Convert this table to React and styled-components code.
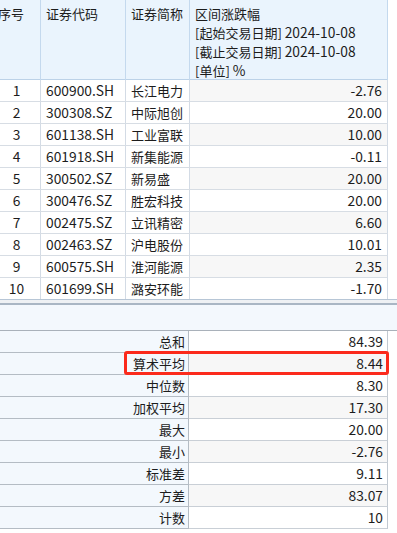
import React from "react";
import styled, { createGlobalStyle } from "styled-components";

const GlobalStyle = createGlobalStyle`
  html, body {
    margin: 0;
    padding: 0;
    background: #ffffff;
  }
  body {
    font-family: "Noto Sans CJK SC", "Noto Sans", sans-serif;
    font-size: 13px;
    color: #1c1c1c;
  }
`;

const Page = styled.div`
  width: 397px;
  height: 533px;
  overflow: hidden;
  background: #ffffff;
`;

const Sheet = styled.div`
  margin-left: -7px;
  width: 395px;
`;

const cols = "48px 85px 64px 198px";

const HeaderRow = styled.div`
  display: grid;
  grid-template-columns: ${cols};
  height: 80px;
  box-sizing: border-box;
  background: #eaf4fd;
  border-bottom: 1px solid #bcd2e8;
`;

const HeadCell = styled.div`
  padding: 4px 5px 0 5px;
  line-height: 19px;
  border-right: 1px solid #c4d9ee;
  white-space: nowrap;
`;

const Num = styled.span`
  font-size: 13.8px;
`;

const DataRow = styled.div`
  display: grid;
  grid-template-columns: ${cols};
  height: 22px;
  box-sizing: border-box;
  border-bottom: 1px solid #d7dde4;
  line-height: 21px;
`;

const Cell = styled.div`
  padding: 0 5px;
  border-right: 1px solid #d3dbe5;
  white-space: nowrap;
  text-align: ${(p) => p.$align || "left"};
  background: ${(p) => (p.$shade ? "#f7f7f7" : "#ffffff")};
`;

const Divider = styled.div`
  height: 6px;
  box-sizing: border-box;
  background: #eef1f4;
  border-top: 1px solid #b7c6d6;
  border-bottom: 2px solid #a9b6c4;
  margin-top: -1px;
  width: 404px;
`;

const SummaryHead = styled.div`
  height: 26px;
  box-sizing: border-box;
  background: #f3f8fd;
  border-bottom: 1px solid #a9b1ba;
  width: 404px;
`;

const SummaryRow = styled.div`
  position: relative;
  display: grid;
  grid-template-columns: 196px 199px;
  height: 22px;
  box-sizing: border-box;
  line-height: 21px;
`;

const Label = styled.div`
  text-align: right;
  padding-right: 3px;
  background: #f3f8fd;
  border-bottom: 1px solid #b4bcc4;
  border-right: 1px solid #b4bcc4;
`;

const Value = styled.div`
  text-align: right;
  padding-right: 4px;
  background: ${(p) => (p.$shade ? "#f7f7f7" : "#ffffff")};
  border-bottom: 1px solid #c9cfd6;
  border-right: 1px solid #c2c9d1;
`;

const Highlight = styled.div`
  position: absolute;
  left: 131px;
  right: -1px;
  top: -2px;
  bottom: 0;
  border: 3px solid #fb2a1c;
  border-radius: 3px;
  pointer-events: none;
`;

const rows = [
  ["1", "600900.SH", "长江电力", "-2.76"],
  ["2", "300308.SZ", "中际旭创", "20.00"],
  ["3", "601138.SH", "工业富联", "10.00"],
  ["4", "601918.SH", "新集能源", "-0.11"],
  ["5", "300502.SZ", "新易盛", "20.00"],
  ["6", "300476.SZ", "胜宏科技", "20.00"],
  ["7", "002475.SZ", "立讯精密", "6.60"],
  ["8", "002463.SZ", "沪电股份", "10.01"],
  ["9", "600575.SH", "淮河能源", "2.35"],
  ["10", "601699.SH", "潞安环能", "-1.70"],
];

const stats = [
  ["总和", "84.39"],
  ["算术平均", "8.44", true],
  ["中位数", "8.30"],
  ["加权平均", "17.30"],
  ["最大", "20.00"],
  ["最小", "-2.76"],
  ["标准差", "9.11"],
  ["方差", "83.07"],
  ["计数", "10"],
];

export default function App() {
  return (
    <Page>
      <GlobalStyle />
      <Sheet>
        <HeaderRow>
          <HeadCell>序号</HeadCell>
          <HeadCell>证券代码</HeadCell>
          <HeadCell>证券简称</HeadCell>
          <HeadCell>
            区间涨跌幅
            <br />
            [起始交易日期] <Num>2024-10-08</Num>
            <br />
            [截止交易日期] <Num>2024-10-08</Num>
            <br />
            [单位] <Num>%</Num>
          </HeadCell>
        </HeaderRow>
        {rows.map((r, i) => (
          <DataRow key={r[0]}>
            <Cell $align="center">
              <Num>{r[0]}</Num>
            </Cell>
            <Cell>
              <Num>{r[1]}</Num>
            </Cell>
            <Cell>{r[2]}</Cell>
            <Cell $align="right" $shade={i % 2 === 0}>
              <Num>{r[3]}</Num>
            </Cell>
          </DataRow>
        ))}
        <Divider />
        <SummaryHead />
        {stats.map((s, i) => (
          <SummaryRow key={s[0]}>
            <Label>{s[0]}</Label>
            <Value $shade={i % 2 === 1}>
              <Num>{s[1]}</Num>
            </Value>
            {s[2] && <Highlight />}
          </SummaryRow>
        ))}
      </Sheet>
    </Page>
  );
}
